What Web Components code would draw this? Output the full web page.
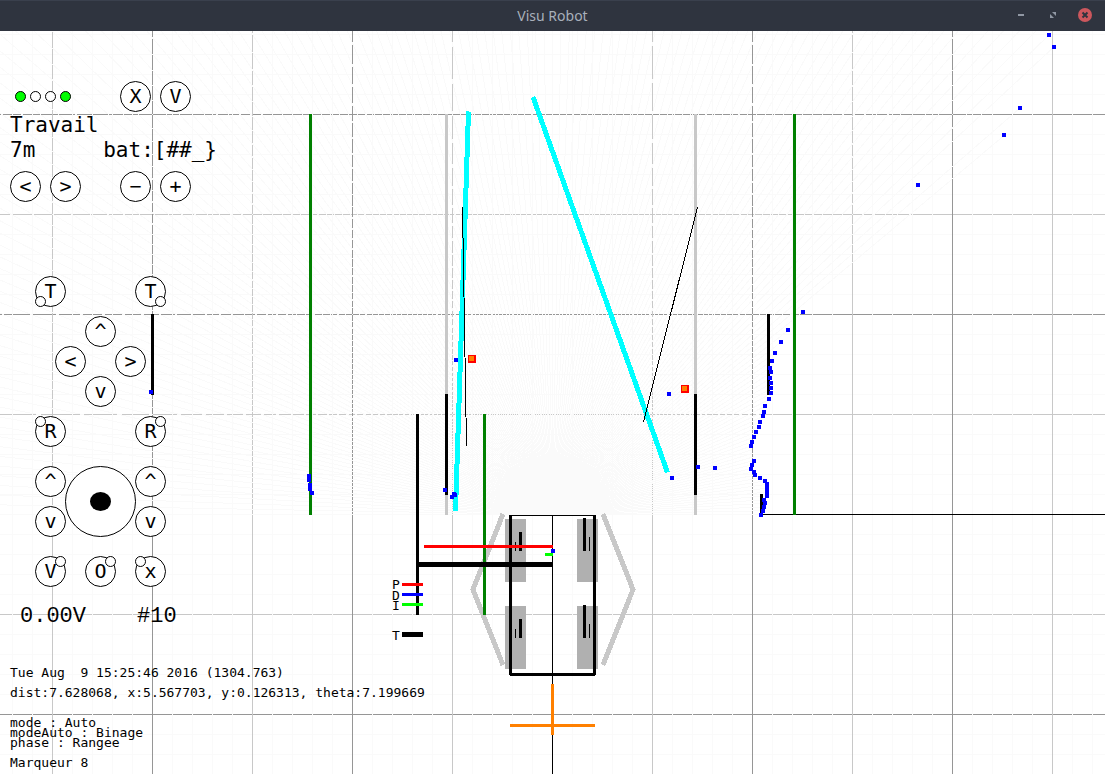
<!DOCTYPE html>
<html lang="fr">
<head>
<meta charset="utf-8">
<title>Visu Robot</title>
<style>
html, body { margin: 0; height: 100%; }
body { font-family: "DejaVu Sans Mono", monospace; color: #000; background: #fff; overflow: hidden; }
</style>
</head>
<body>
<visu-window heading="Visu Robot">
  <field-map></field-map>
  <control-panel></control-panel>
</visu-window>

<template id="window-template">
  <style>
    :host { display: flex; flex-direction: column; min-height: 100vh; }
    header { display: grid; grid-template-columns: 1fr auto 1fr; align-items: center; height: 31px; box-sizing: border-box;
      background: #2f343f; border-top: 1px solid #3a404d; color: #a8b0bb; font: 14px/30px "Noto Sans", sans-serif; }
    h1 { grid-column: 2; margin: 0; font: inherit; }
    nav { grid-column: 3; display: flex; justify-content: flex-end; gap: 16px; padding-right: 12px; }
    nav button { width: 16px; height: 16px; padding: 0; border: 0; background: none; }
    nav svg { display: block; }
    main { flex: 1; display: grid; grid-template: minmax(0, 1fr) / minmax(0, 1fr); overflow: hidden; }
    ::slotted(*) { grid-area: 1 / 1; }
  </style>
  <header>
    <h1></h1>
    <nav>
      <button aria-label="Minimize"><svg width="16" height="16"><rect x="5" y="6" width="6" height="2" fill="#9097a3"/></svg></button>
      <button aria-label="Maximize"><svg width="16" height="16"><path d="M7 4h4v4zM5 6v4h4z" fill="#9097a3"/></svg></button>
      <button aria-label="Close"><svg width="16" height="16"><circle cx="8" cy="7" r="7" fill="#cc575d"/><path d="M5.5 4.5l5 5m0-5l-5 5" stroke="#2f343f" stroke-width="2"/></svg></button>
    </nav>
  </header>
  <main><slot></slot></main>
</template>

<template id="map-template">
  <style>
    :host { display: block; min-width: 0; min-height: 0; }
    svg { display: block; width: 100%; height: 100%; }
    text { font: 13px "DejaVu Sans Mono", monospace; }
  </style>
  <svg viewBox="0 31 1105 743" preserveAspectRatio="xMidYMid slice" shape-rendering="crispEdges" role="img" aria-label="Carte du robot">
    <g id="grid"></g>
    <g fill="none" stroke="#fafafa" id="rays"></g>
    <g fill="#c8c8c8">
      <rect x="445" y="114" width="3" height="401"/><rect x="694" y="114" width="3" height="401"/>
    </g>
    <g>
      <rect x="445" y="394" width="3" height="101"/><rect x="694" y="394" width="3" height="101"/>
      <rect x="151" y="314" width="3" height="81"/><rect x="767" y="314" width="3" height="81"/>
      <rect x="760" y="494" width="3" height="21"/>
    </g>
    <g fill="#008000">
      <rect x="309" y="114" width="3" height="401"/><rect x="793" y="114" width="3" height="401"/>
    </g>
    <g fill="none" stroke="#0ff" stroke-width="5">
      <path d="M468.5 111.5L455.5 511M533 97L667.5 472.5"/>
    </g>
    <path d="M462.5 207L466.5 446M697.5 207L643.5 422" stroke="#000"/>
    <path d="M503 514L473 589.5L503 665M603 514L633 589.5L603 665" fill="none" stroke="#c8c8c8" stroke-width="5"/>
    <rect x="416" y="414" width="3" height="201"/>
    <rect x="483" y="414" width="3" height="201" fill="#008000"/>
    <g fill="#b0b0b0">
      <rect x="505" y="519" width="21" height="63"/><rect x="577" y="519" width="21" height="63"/>
      <rect x="505" y="606" width="21" height="63"/><rect x="577" y="606" width="21" height="63"/>
    </g>
    <g>
      <rect x="519" y="532" width="3" height="19"/><rect x="515" y="542" width="1" height="9"/>
      <rect x="583" y="518" width="3" height="33"/><rect x="589" y="537" width="1" height="14"/>
      <rect x="519" y="619" width="3" height="19"/><rect x="515" y="629" width="1" height="9"/>
      <rect x="583" y="605" width="3" height="33"/><rect x="589" y="624" width="1" height="14"/>
      <rect x="509" y="515" width="87" height="1"/><rect x="509" y="515" width="3" height="160"/>
      <rect x="593" y="515" width="3" height="160"/><rect x="510" y="673" width="85" height="3"/>
      <rect x="416" y="562" width="137" height="5"/>
    </g>
    <rect x="424" y="545" width="129" height="3" fill="#f00"/>
    <rect x="545" y="553" width="8" height="3" fill="#0f0"/>
    <g fill="#ff8000">
      <rect x="551" y="684" width="3" height="51"/><rect x="510" y="724" width="85" height="3"/>
    </g>
    <rect x="402" y="583" width="21" height="3" fill="#f00"/>
    <rect x="402" y="593" width="21" height="3" fill="#00f"/>
    <rect x="402" y="603" width="21" height="3" fill="#0f0"/>
    <rect x="402" y="632" width="21" height="5"/>
    <text x="392" y="589">P</text><text x="392" y="600">D</text><text x="392" y="610">I</text><text x="392" y="640">T</text>
    <g fill="#f00">
      <rect x="468" y="355" width="8" height="8"/><rect x="681" y="385" width="8" height="8"/>
    </g>
    <g fill="#ff8000">
      <rect x="469" y="356" width="5" height="5"/><rect x="682" y="386" width="5" height="5"/>
    </g>
    <g fill="#00f" id="echoes"></g>
  </svg>
</template>

<template id="key-template">
  <style>
    :host { display: block; position: relative; width: 31px; height: 31px; }
    button { display: block; width: 31px; height: 31px; box-sizing: border-box; padding: 0; border: 1px solid #000; border-radius: 50%;
      background: #fff; color: #000; font: 20px/29px "DejaVu Sans Mono", monospace; text-align: center; }
    i { position: absolute; width: 11px; height: 11px; box-sizing: border-box; border: 1px solid #000; border-radius: 50%; background: #fff; display: none; }
    :host([mark]) i { display: block; }
    :host([mark^="top"]) i { top: 0; }
    :host([mark^="bottom"]) i { bottom: 0; }
    :host([mark$="left"]) i { left: 0; }
    :host([mark$="right"]) i { right: 0; }
  </style>
  <button><slot></slot></button><i></i>
</template>

<template id="led-template">
  <style>
    :host { display: block; box-sizing: border-box; width: 11px; height: 11px; border: 1px solid #000; border-radius: 50%; background: #fff; }
    :host([on]) { background: #0f0; }
  </style>
</template>

<template id="stick-template">
  <style>
    :host { display: grid; place-items: center; box-sizing: border-box; width: 71px; height: 71px; border: 1px solid #000; border-radius: 50%; background: #fff; }
    button { width: 21px; height: 19px; padding: 0; border: 0; border-radius: 50%; background: #000; }
  </style>
  <button aria-label="Manette"></button>
</template>

<template id="panel-template">
  <style>
    :host { display: block; position: relative; justify-self: start; width: 440px; padding: 50px 0 0 10px; box-sizing: border-box; }
    .row { display: flex; align-items: center; width: 181px; height: 31px; }
    .leds { display: flex; gap: 4px; padding-left: 5px; }
    .pair { display: flex; gap: 9px; }
    .end { margin-left: auto; }
    .big { font: 21px/25px "DejaVu Sans Mono", monospace; white-space: pre; }
    .status { display: flex; width: 207px; justify-content: space-between; }
    .first { padding-top: 1px; }
    .status + .row { margin-top: 8px; }
    .pad { display: grid; grid-template: repeat(31, 10px) / repeat(13, 10px); margin: 74px 0 0 25px; }
    .pad > * { grid-area: var(--r) / var(--c); }
    .volts { display: flex; gap: 51px; padding: 18px 0 0 10px; font: 22px/25px "Liberation Mono", monospace; }
    .log { font: 13px/20px "DejaVu Sans Mono", monospace; margin: 0; white-space: pre; }
    .info { padding-top: 34px; }
    .modes { line-height: 10px; padding: 15px 0 5px; }
  </style>
  <div class="row">
    <div class="leds"><status-led on></status-led><status-led></status-led><status-led></status-led><status-led on></status-led></div>
    <div class="pair end"><round-key>X</round-key><round-key>V</round-key></div>
  </div>
  <div class="big first">Travail</div>
  <div class="big status"><span>7m</span><span>bat:[##_}</span></div>
  <div class="row">
    <div class="pair"><round-key>&lt;</round-key><round-key>&gt;</round-key></div>
    <div class="pair end"><round-key>−</round-key><round-key>+</round-key></div>
  </div>
  <div class="pad">
    <round-key mark="bottom-left" style="--r:1;--c:1">T</round-key>
    <round-key mark="bottom-right" style="--r:1;--c:11">T</round-key>
    <round-key style="--r:5;--c:6">^</round-key>
    <round-key style="--r:8;--c:3">&lt;</round-key>
    <round-key style="--r:8;--c:9">&gt;</round-key>
    <round-key style="--r:11;--c:6">v</round-key>
    <round-key mark="top-left" style="--r:15;--c:1">R</round-key>
    <round-key mark="top-right" style="--r:15;--c:11">R</round-key>
    <round-key style="--r:20;--c:1">^</round-key>
    <joy-stick style="--r:20;--c:4"></joy-stick>
    <round-key style="--r:20;--c:11">^</round-key>
    <round-key style="--r:24;--c:1">v</round-key>
    <round-key style="--r:24;--c:11">v</round-key>
    <round-key mark="top-right" style="--r:29;--c:1">V</round-key>
    <round-key mark="top-right" style="--r:29;--c:6">O</round-key>
    <round-key mark="top-left" style="--r:29;--c:11">x</round-key>
  </div>
  <div class="volts"><span>0.00V</span><span>#10</span></div>
  <p class="log info">Tue Aug  9 15:25:46 2016 (1304.763)</p>
  <p class="log">dist:7.628068, x:5.567703, y:0.126313, theta:7.199669</p>
  <div class="log modes"><div>mode : Auto</div><div>modeAuto : Binage</div><div>phase : Rangee</div></div>
  <p class="log">Marqueur 8</p>
</template>

<script>
const stamp = (host, id) => {
  const root = host.attachShadow({ mode: "open" });
  root.append(document.getElementById(id).content.cloneNode(true));
  return root;
};

customElements.define("visu-window", class extends HTMLElement {
  constructor() {
    super();
    stamp(this, "window-template").querySelector("h1").textContent = this.getAttribute("heading");
  }
});

/* Laser echoes, one per degree at most; a ray stops at its echo. */
const ECHOES = [[1049,35],[1054,47],[1020,108],[1004,135],[918,185],[803,312],[788,330],[781,342],[775,353],[772,361],
  [770,368],[771,372],[770,378],[771,383],[771,388],[771,393],[769,399],[765,406],[764,412],[763,416],[760,422],[759,427],
  [756,432],[754,437],[752,442],[751,446],[754,461],[752,465],[751,469],[754,472],[755,475],[760,478],[765,481],[767,484],
  [767,488],[767,492],[767,496],[764,500],[765,503],[764,507],[763,511],[761,515],[669,394],[672,478],[698,467],[715,468],
  [456,360],[445,490],[452,497],[454,494],[455,495],[309,476],[309,480],[310,485],[310,489],[312,493],[151,392],[553,551]];

customElements.define("field-map", class extends HTMLElement {
  constructor() {
    super();
    const root = stamp(this, "map-template");
    const cx = 552, cy = 514, tone = n => n % 10 === 0 ? "#969696" : n % 5 === 0 ? "#c8c8c8" : "#fafafa";
    const bar = (x, y, w, h, c) => `<rect x="${x}" y="${y}" width="${w}" height="${h}" fill="${c}"/>`;
    let grid = "";
    for (let n = -25; n <= 14; n++) grid += bar(-500, cy + n * 20, 2105, 1, tone(n));
    for (const major of [false, true])
      for (let n = -50; n <= 50; n++)
        if ((n % 5 === 0) === major) grid += bar(cx + n * 20, 0, 1, 800, tone(n));
    grid += bar(-500, cy, 2105, 1, "#000") + bar(cx, 0, 1, 800, "#000");
    root.getElementById("grid").innerHTML = grid;

    const reach = new Map();
    for (const [x, y] of ECHOES) {
      if (y > 520) continue;
      const deg = Math.max(0, Math.round(Math.atan2(cy - y, x - cx) * 180 / Math.PI));
      if (x > 740) reach.set(deg, Math.hypot(x - cx, y - cy));
    }
    let d = "";
    for (let a = 0; a <= 180; a++) {
      const len = reach.get(a) ?? (a < 44 ? 210 : 1200), t = a * Math.PI / 180;
      d += `M${cx}.5 ${cy}.5L${(cx + .5 + len * Math.cos(t)).toFixed(1)} ${(cy + .5 - len * Math.sin(t)).toFixed(1)}`;
    }
    root.getElementById("rays").innerHTML = `<path d="${d}"/>`;
    root.getElementById("echoes").innerHTML = ECHOES.map(([x, y]) => bar(x - 2, y - 2, 4, 4, "#00f")).join("");
  }
});

for (const [tag, id] of [["round-key", "key-template"], ["status-led", "led-template"], ["joy-stick", "stick-template"], ["control-panel", "panel-template"]])
  customElements.define(tag, class extends HTMLElement {
    constructor() { super(); stamp(this, id); }
  });
</script>
</body>
</html>
